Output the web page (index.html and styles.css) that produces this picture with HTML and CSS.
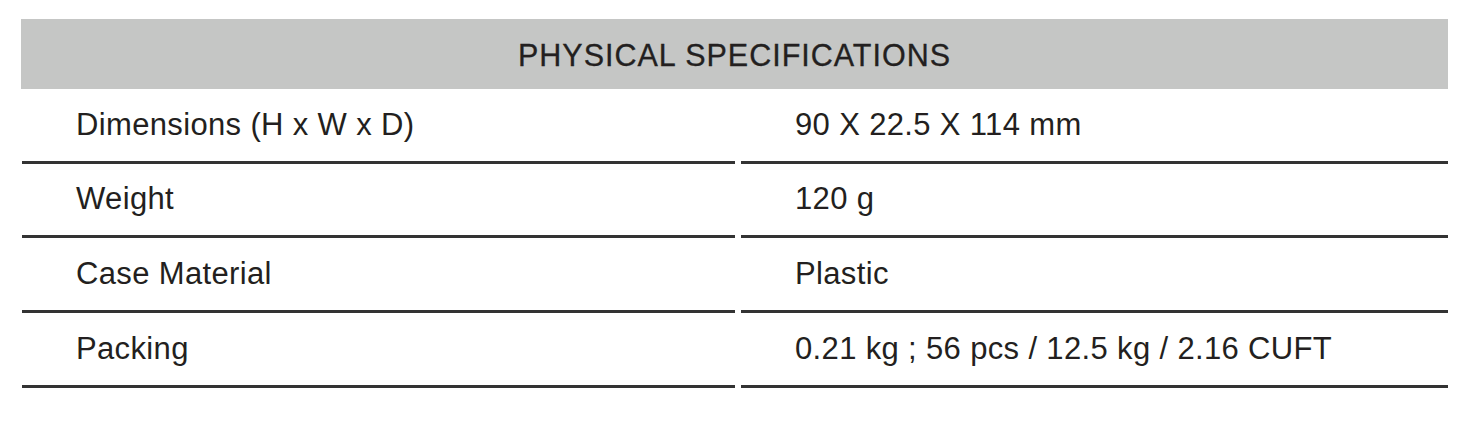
FILE: index.html
```html
<!DOCTYPE html>
<html>
<head>
<meta charset="utf-8">
<link rel="stylesheet" href="styles.css">
</head>
<body>
<div class="specs">
  <div class="specs-head">PHYSICAL SPECIFICATIONS</div>
  <div class="specs-grid">
    <div class="cell label">Dimensions (H x W x D)</div>
    <div class="cell value">90 X 22.5 X 114 mm</div>
    <div class="cell label">Weight</div>
    <div class="cell value">120 g</div>
    <div class="cell label">Case Material</div>
    <div class="cell value">Plastic</div>
    <div class="cell label">Packing</div>
    <div class="cell value">0.21 kg ; 56 pcs / 12.5 kg / 2.16 CUFT</div>
  </div>
</div>
</body>
</html>
```

FILE: styles.css
```css
html, body {
  margin: 0;
  padding: 0;
  background: #ffffff;
}

body {
  font-family: "Liberation Sans", Arial, sans-serif;
  color: #231f20;
}

.specs {
  margin: 19px 0 0 21px;
  width: 1427px;
}

.specs-head {
  height: 70px;
  background: #c5c6c5;
  display: flex;
  align-items: center;
  justify-content: center;
  font-size: 30.5px;
  letter-spacing: 1px;
  padding-top: 3px;
  box-sizing: border-box;
  -webkit-text-stroke: 0.3px #231f20;
}

.specs-grid {
  display: grid;
  grid-template-columns: 714px 707px;
  column-gap: 6px;
  grid-auto-rows: 74.67px;
}

.cell {
  display: flex;
  align-items: center;
  border-bottom: 3px solid #333333;
  box-sizing: border-box;
  font-size: 31px;
  letter-spacing: 0.35px;
}

.label {
  padding-left: 54px;
  margin-left: 1px;
}

.value {
  padding-left: 54px;
}
```
